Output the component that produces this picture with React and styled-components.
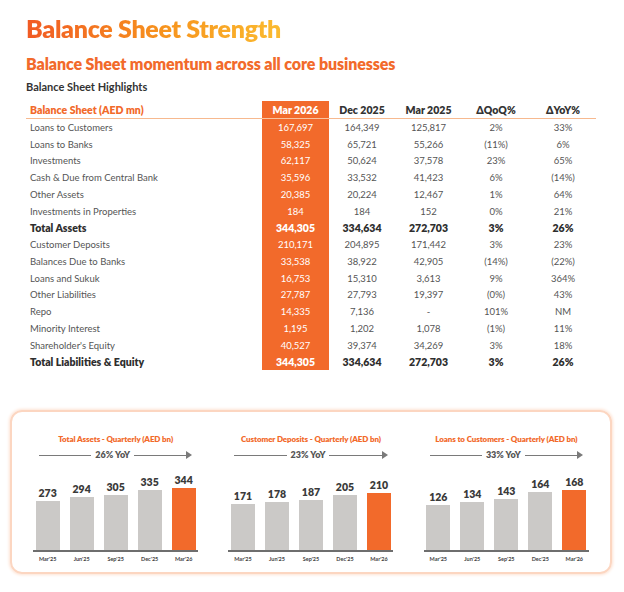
import React from "react";
import styled, { createGlobalStyle } from "styled-components";

const GlobalStyle = createGlobalStyle`
  body {
    margin: 0;
    background: #ffffff;
    font-family: "Lato", "Open Sans", sans-serif;
  }
`;

const rows = [
  ["Loans to Customers", "167,697", "164,349", "125,817", "2%", "33%"],
  ["Loans to Banks", "58,325", "65,721", "55,266", "(11%)", "6%"],
  ["Investments", "62,117", "50,624", "37,578", "23%", "65%"],
  ["Cash & Due from Central Bank", "35,596", "33,532", "41,423", "6%", "(14%)"],
  ["Other Assets", "20,385", "20,224", "12,467", "1%", "64%"],
  ["Investments in Properties", "184", "184", "152", "0%", "21%"],
  ["Total Assets", "344,305", "334,634", "272,703", "3%", "26%", true],
  ["Customer Deposits", "210,171", "204,895", "171,442", "3%", "23%"],
  ["Balances Due to Banks", "33,538", "38,922", "42,905", "(14%)", "(22%)"],
  ["Loans and Sukuk", "16,753", "15,310", "3,613", "9%", "364%"],
  ["Other Liabilities", "27,787", "27,793", "19,397", "(0%)", "43%"],
  ["Repo", "14,335", "7,136", "-", "101%", "NM"],
  ["Minority Interest", "1,195", "1,202", "1,078", "(1%)", "11%"],
  ["Shareholder's Equity", "40,527", "39,374", "34,269", "3%", "18%"],
  ["Total Liabilities & Equity", "344,305", "334,634", "272,703", "3%", "26%", true],
];

const charts = [
  { title: "Total Assets - Quarterly (AED bn)", yoy: "26% YoY", values: [273, 294, 305, 335, 344], scale: 62 },
  { title: "Customer Deposits - Quarterly (AED bn)", yoy: "23% YoY", values: [171, 178, 187, 205, 210], scale: 57 },
  { title: "Loans to Customers - Quarterly (AED bn)", yoy: "33% YoY", values: [126, 134, 143, 164, 168], scale: 60 },
];

const quarters = ["Mar'25", "Jun'25", "Sep'25", "Dec'25", "Mar'26"];

export default function App() {
  return (
    <Page>
      <GlobalStyle />
      <Title>Balance Sheet Strength</Title>
      <Subtitle>Balance Sheet momentum across all core businesses</Subtitle>
      <Caption>Balance Sheet Highlights</Caption>

      <Table>
        <HeadCell $align="left">Balance Sheet (AED mn)</HeadCell>
        <HeadCell $hl>Mar 2026</HeadCell>
        <HeadCell>Dec 2025</HeadCell>
        <HeadCell>Mar 2025</HeadCell>
        <HeadCell>ΔQoQ%</HeadCell>
        <HeadCell>ΔYoY%</HeadCell>
        {rows.map((r) => {
          const bold = r[6];
          return (
            <React.Fragment key={r[0]}>
              <Cell $align="left" $bold={bold}>{r[0]}</Cell>
              <Cell $hl $bold={bold}>{r[1]}</Cell>
              <Cell $bold={bold}>{r[2]}</Cell>
              <Cell $bold={bold}>{r[3]}</Cell>
              <Cell $bold={bold}>{r[4]}</Cell>
              <Cell $bold={bold}>{r[5]}</Cell>
            </React.Fragment>
          );
        })}
      </Table>

      <Panel>
        {charts.map((c) => {
          const max = Math.max(...c.values);
          return (
            <Chart key={c.title}>
              <ChartTitle>{c.title}</ChartTitle>
              <Growth>
                <Line />
                <span>{c.yoy}</span>
                <Line />
                <svg width="6" height="8" viewBox="0 0 6 8">
                  <path d="M0 0 L6 4 L0 8 Z" fill="#7a7a7a" />
                </svg>
              </Growth>
              <Plot>
                {c.values.map((v, i) => (
                  <BarCol key={i}>
                    <BarValue>{v}</BarValue>
                    <Bar $last={i === c.values.length - 1} style={{ height: (v / max) * c.scale }} />
                  </BarCol>
                ))}
              </Plot>
              <Axis>
                {quarters.map((q) => (
                  <span key={q}>{q}</span>
                ))}
              </Axis>
            </Chart>
          );
        })}
      </Panel>
    </Page>
  );
}

const Page = styled.div`
  width: 624px;
  height: 592px;
  padding-top: 12px;
  box-sizing: border-box;
  overflow: hidden;
`;

const Title = styled.h1`
  margin: 0 0 0 26px;
  display: inline-block;
  font-size: 25px;
  line-height: 32px;
  font-weight: 800;
  letter-spacing: -0.3px;
  background: linear-gradient(90deg, #f15a24 0%, #f7941d 55%, #fbbb30 100%);
  -webkit-background-clip: text;
  background-clip: text;
  color: transparent;
`;

const Subtitle = styled.h2`
  margin: 10px 0 0 26px;
  font-size: 16px;
  line-height: 20px;
  font-weight: 800;
  letter-spacing: -0.1px;
  color: #f26a2b;
`;

const Caption = styled.div`
  margin: 6px 0 0 26px;
  font-size: 11px;
  line-height: 14px;
  font-weight: 700;
  color: #333333;
`;

const Table = styled.div`
  margin: 7px 0 0 26px;
  width: 570px;
  display: grid;
  grid-template-columns: 236px 67px 66px 67px 68px 66px;
  grid-auto-rows: 16.75px;
  grid-template-rows: 18px;
`;

const HeadCell = styled.div`
  display: flex;
  align-items: center;
  justify-content: ${(p) => (p.$align === "left" ? "flex-start" : "center")};
  padding-left: ${(p) => (p.$align === "left" ? "4px" : "0")};
  font-size: 10.5px;
  font-weight: 800;
  color: ${(p) => (p.$align === "left" ? "#f26a2b" : p.$hl ? "#ffffff" : "#333333")};
  background: ${(p) => (p.$hl ? "#f26a2b" : "transparent")};
  border-bottom: 1px solid ${(p) => (p.$hl ? "#f9c3a1" : "#f7b98f")};
  box-sizing: border-box;
`;

const Cell = styled.div`
  display: flex;
  align-items: center;
  justify-content: ${(p) => (p.$align === "left" ? "flex-start" : "center")};
  padding-left: ${(p) => (p.$align === "left" ? "4px" : "0")};
  font-size: ${(p) => (p.$bold ? "10.5px" : "9.5px")};
  font-weight: ${(p) => (p.$bold ? 800 : 400)};
  color: ${(p) => (p.$hl ? "#ffffff" : p.$bold ? "#2e2e2e" : "#555555")};
  background: ${(p) => (p.$hl ? "#f26a2b" : "transparent")};
  white-space: nowrap;
`;

const Panel = styled.div`
  margin: 40px 0 0 10px;
  width: 602px;
  height: 164px;
  box-sizing: border-box;
  border: 2px solid #fcd6c1;
  border-radius: 12px;
  box-shadow: 0 0 3px 1px #fde3d4;
  display: grid;
  grid-template-columns: repeat(3, 1fr);
  padding: 0 6px 0 6px;
`;

const Chart = styled.div`
  display: flex;
  flex-direction: column;
  align-items: center;
  padding-top: 22px;
`;

const ChartTitle = styled.div`
  font-size: 8px;
  line-height: 10px;
  font-weight: 800;
  color: #f26a2b;
  letter-spacing: -0.1px;
`;

const Growth = styled.div`
  margin-top: 6px;
  width: 153px;
  display: flex;
  align-items: center;
  gap: 4px;
  font-size: 9px;
  line-height: 10px;
  font-weight: 800;
  color: #555555;
  svg {
    margin-left: -4px;
  }
`;

const Line = styled.div`
  flex: 1;
  height: 1px;
  background: #7a7a7a;
`;

const Plot = styled.div`
  margin-top: 6px;
  width: 165px;
  height: 84px;
  display: flex;
  align-items: flex-end;
  justify-content: center;
  gap: 10px;
  border-bottom: 2px solid #6e6e6e;
`;

const BarCol = styled.div`
  display: flex;
  flex-direction: column;
  align-items: center;
`;

const BarValue = styled.div`
  font-size: 10.5px;
  line-height: 12px;
  font-weight: 800;
  color: #3a3a3a;
  margin-bottom: 2px;
`;

const Bar = styled.div`
  width: 24px;
  background: ${(p) => (p.$last ? "#f26a2b" : "#cbc9c7")};
`;

const Axis = styled.div`
  margin-top: 3px;
  width: 160px;
  display: flex;
  justify-content: space-between;
  font-size: 5.5px;
  line-height: 8px;
  font-weight: 700;
  color: #444444;
  span {
    width: 24px;
    text-align: center;
  }
`;
